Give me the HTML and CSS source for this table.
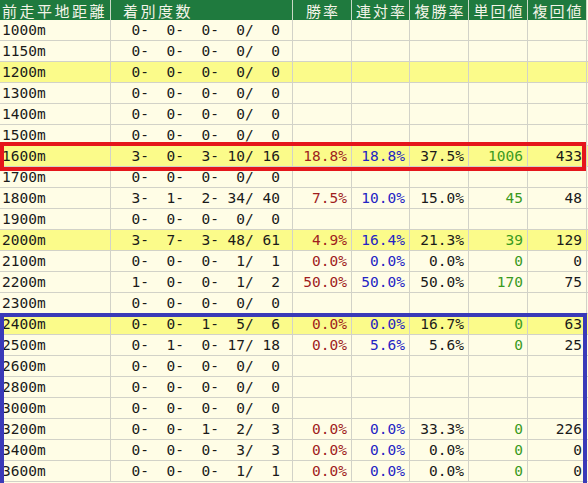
FILE: index.html
```html
<!DOCTYPE html>
<html lang="ja">
<head>
<meta charset="utf-8">
<title>前走平地距離</title>
<link rel="stylesheet" href="styles.css">
</head>
<body>
<div class="sheet">
  <div class="row head">
    <div class="c dist"><span class="ht">前走平地距離</span></div>
    <div class="c rec"><span class="ht">着別度数</span></div>
    <div class="c ctr"><span class="ht">勝率</span></div>
    <div class="c ctr"><span class="ht">連対率</span></div>
    <div class="c ctr"><span class="ht">複勝率</span></div>
    <div class="c ctr"><span class="ht">単回値</span></div>
    <div class="c ctr"><span class="ht">複回値</span></div>
    <div class="c end"></div>
  </div>
  <div class="row"><div class="c dist">1000m</div><div class="c rec">  0-  0-  0-  0/  0</div><div class="c num win"></div><div class="c num ren"></div><div class="c num fuku"></div><div class="c num tan"></div><div class="c num fk"></div><div class="c end"></div></div>
  <div class="row"><div class="c dist">1150m</div><div class="c rec">  0-  0-  0-  0/  0</div><div class="c num win"></div><div class="c num ren"></div><div class="c num fuku"></div><div class="c num tan"></div><div class="c num fk"></div><div class="c end"></div></div>
  <div class="row hl"><div class="c dist">1200m</div><div class="c rec">  0-  0-  0-  0/  0</div><div class="c num win"></div><div class="c num ren"></div><div class="c num fuku"></div><div class="c num tan"></div><div class="c num fk"></div><div class="c end"></div></div>
  <div class="row"><div class="c dist">1300m</div><div class="c rec">  0-  0-  0-  0/  0</div><div class="c num win"></div><div class="c num ren"></div><div class="c num fuku"></div><div class="c num tan"></div><div class="c num fk"></div><div class="c end"></div></div>
  <div class="row"><div class="c dist">1400m</div><div class="c rec">  0-  0-  0-  0/  0</div><div class="c num win"></div><div class="c num ren"></div><div class="c num fuku"></div><div class="c num tan"></div><div class="c num fk"></div><div class="c end"></div></div>
  <div class="row"><div class="c dist">1500m</div><div class="c rec">  0-  0-  0-  0/  0</div><div class="c num win"></div><div class="c num ren"></div><div class="c num fuku"></div><div class="c num tan"></div><div class="c num fk"></div><div class="c end"></div></div>
  <div class="row hl"><div class="c dist">1600m</div><div class="c rec">  3-  0-  3- 10/ 16</div><div class="c num win">18.8%</div><div class="c num ren">18.8%</div><div class="c num fuku">37.5%</div><div class="c num tan">1006</div><div class="c num fk">433</div><div class="c end"></div></div>
  <div class="row"><div class="c dist">1700m</div><div class="c rec">  0-  0-  0-  0/  0</div><div class="c num win"></div><div class="c num ren"></div><div class="c num fuku"></div><div class="c num tan"></div><div class="c num fk"></div><div class="c end"></div></div>
  <div class="row"><div class="c dist">1800m</div><div class="c rec">  3-  1-  2- 34/ 40</div><div class="c num win">7.5%</div><div class="c num ren">10.0%</div><div class="c num fuku">15.0%</div><div class="c num tan">45</div><div class="c num fk">48</div><div class="c end"></div></div>
  <div class="row"><div class="c dist">1900m</div><div class="c rec">  0-  0-  0-  0/  0</div><div class="c num win"></div><div class="c num ren"></div><div class="c num fuku"></div><div class="c num tan"></div><div class="c num fk"></div><div class="c end"></div></div>
  <div class="row hl"><div class="c dist">2000m</div><div class="c rec">  3-  7-  3- 48/ 61</div><div class="c num win">4.9%</div><div class="c num ren">16.4%</div><div class="c num fuku">21.3%</div><div class="c num tan">39</div><div class="c num fk">129</div><div class="c end"></div></div>
  <div class="row"><div class="c dist">2100m</div><div class="c rec">  0-  0-  0-  1/  1</div><div class="c num win">0.0%</div><div class="c num ren">0.0%</div><div class="c num fuku">0.0%</div><div class="c num tan">0</div><div class="c num fk">0</div><div class="c end"></div></div>
  <div class="row"><div class="c dist">2200m</div><div class="c rec">  1-  0-  0-  1/  2</div><div class="c num win">50.0%</div><div class="c num ren">50.0%</div><div class="c num fuku">50.0%</div><div class="c num tan">170</div><div class="c num fk">75</div><div class="c end"></div></div>
  <div class="row"><div class="c dist">2300m</div><div class="c rec">  0-  0-  0-  0/  0</div><div class="c num win"></div><div class="c num ren"></div><div class="c num fuku"></div><div class="c num tan"></div><div class="c num fk"></div><div class="c end"></div></div>
  <div class="row hl"><div class="c dist">2400m</div><div class="c rec">  0-  0-  1-  5/  6</div><div class="c num win">0.0%</div><div class="c num ren">0.0%</div><div class="c num fuku">16.7%</div><div class="c num tan">0</div><div class="c num fk">63</div><div class="c end"></div></div>
  <div class="row"><div class="c dist">2500m</div><div class="c rec">  0-  1-  0- 17/ 18</div><div class="c num win">0.0%</div><div class="c num ren">5.6%</div><div class="c num fuku">5.6%</div><div class="c num tan">0</div><div class="c num fk">25</div><div class="c end"></div></div>
  <div class="row"><div class="c dist">2600m</div><div class="c rec">  0-  0-  0-  0/  0</div><div class="c num win"></div><div class="c num ren"></div><div class="c num fuku"></div><div class="c num tan"></div><div class="c num fk"></div><div class="c end"></div></div>
  <div class="row"><div class="c dist">2800m</div><div class="c rec">  0-  0-  0-  0/  0</div><div class="c num win"></div><div class="c num ren"></div><div class="c num fuku"></div><div class="c num tan"></div><div class="c num fk"></div><div class="c end"></div></div>
  <div class="row"><div class="c dist">3000m</div><div class="c rec">  0-  0-  0-  0/  0</div><div class="c num win"></div><div class="c num ren"></div><div class="c num fuku"></div><div class="c num tan"></div><div class="c num fk"></div><div class="c end"></div></div>
  <div class="row"><div class="c dist">3200m</div><div class="c rec">  0-  0-  1-  2/  3</div><div class="c num win">0.0%</div><div class="c num ren">0.0%</div><div class="c num fuku">33.3%</div><div class="c num tan">0</div><div class="c num fk">226</div><div class="c end"></div></div>
  <div class="row"><div class="c dist">3400m</div><div class="c rec">  0-  0-  0-  3/  3</div><div class="c num win">0.0%</div><div class="c num ren">0.0%</div><div class="c num fuku">0.0%</div><div class="c num tan">0</div><div class="c num fk">0</div><div class="c end"></div></div>
  <div class="row"><div class="c dist">3600m</div><div class="c rec">  0-  0-  0-  1/  1</div><div class="c num win">0.0%</div><div class="c num ren">0.0%</div><div class="c num fuku">0.0%</div><div class="c num tan">0</div><div class="c num fk">0</div><div class="c end"></div></div>
  <div class="box box-red"></div>
  <div class="box box-blue"></div>
</div>
</body>
</html>
```
FILE: styles.css
```css
* { box-sizing: border-box; }
html, body {
  margin: 0;
  padding: 0;
  background: #fffde6;
  overflow: hidden;
}
.sheet {
  position: relative;
  width: 588px;
  height: 483px;
  overflow: hidden;
  background: #fffde6;
  font-family: "DejaVu Sans Mono", "Liberation Mono", monospace;
  font-size: 14.5px;
  color: #1a1a1a;
}
.row {
  display: grid;
  grid-template-columns: 111px 182px 59px 58px 59px 59px 59px 1fr;
  height: 21px;
  border-bottom: 1px solid #d2d2c8;
  background: #fffde6;
}
.row.hl { background: #fbfb8a; }
.c {
  border-right: 1px solid #d2d2c8;
  line-height: 20px;
  white-space: pre;
  overflow: hidden;
}
.c.end { border-right: none; }
.dist { padding-left: 2px; }
.rec { text-align: right; padding-right: 12px; }
.num { text-align: right; padding-right: 4px; }
.win { color: #a01e1e; }
.ren { color: #2424c4; }
.fuku { color: #1a1a1a; }
.tan { color: #3a9a1e; }
.fk { color: #1a1a1a; }

.row.head {
  height: 20px;
  background: #1f7a3e;
  border-bottom: none;
  color: #f4f4e8;
  font-family: "Noto Sans CJK JP", sans-serif;
  font-size: 15px;
  letter-spacing: 2.5px;
}
.head .c {
  border-right: 1px solid #c9d9c6;
  overflow: visible;
  display: flex;
  align-items: flex-start;
  line-height: normal;
}
.head .ht {
  display: block;
  line-height: normal;
}
.head .c.end { border-right: none; background: #fffde6; }
.head .dist { padding-left: 2px; }
.head .rec { justify-content: flex-start; padding-left: 12px; }
.head .ctr { justify-content: center; padding: 0 0 0 2px; letter-spacing: 2px; }

.box {
  position: absolute;
  left: 0;
  border-style: solid;
  border-width: 4px;
}
.box-red {
  top: 142px;
  width: 586px;
  height: 29px;
  border-color: #e5161c;
}
.box-blue {
  top: 313px;
  width: 587px;
  height: 200px;
  border-color: #3a3ab8;
}
```
